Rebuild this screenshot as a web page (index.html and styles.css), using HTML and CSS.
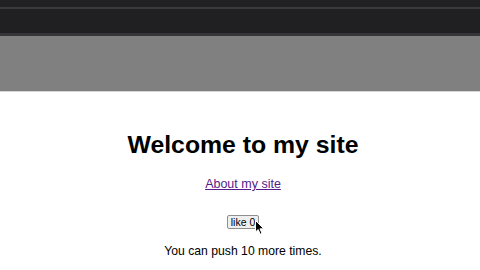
FILE: index.html
```html
<!DOCTYPE html>
<html>
<head>
<meta charset="utf-8">
<link rel="stylesheet" href="styles.css">
</head>
<body>
<div class="chrome">
  <div class="tabs"></div>
  <div class="sep"></div>
  <div class="toolbar"></div>
  <div class="sep2"></div>
</div>
<div class="banner"></div>
<div class="edge"></div>
<main class="content">
  <h1 class="title">Welcome to my site</h1>
  <a class="link" href="#">About my site</a>
  <div class="btn-wrap">
    <button class="like">like 0</button>
    <svg class="cursor" width="10" height="16" viewBox="0 0 10 16"><path d="M0.5 0.5 L0.5 12 L3.2 9.5 L5.2 14.2 L7 13.4 L5 8.8 L8.8 8.8 Z" fill="#000" stroke="#fff" stroke-width="1"/></svg>
  </div>
  <p class="note">You can push 10 more times.</p>
</main>
</body>
</html>
```
FILE: styles.css
```css
html, body { margin: 0; padding: 0; background: #fff; }
body { width: 480px; height: 270px; overflow: hidden; font-family: "Liberation Sans", Arial, sans-serif; }
.chrome { background: #202022; }
.tabs { height: 7px; background: #212123; }
.sep { height: 2px; background: #3a3a3d; }
.toolbar { height: 24px; background: #202022; }
.sep2 { height: 3px; background: #36363a; }
.banner { height: 55px; background: #808080; }
.edge { height: 1px; background: #d8d8d8; }
.content { display: flex; flex-direction: column; align-items: center; padding-left: 6px; }
.title { margin: 39px 0 0; font-size: 24.8px; font-weight: bold; line-height: 28px; color: #000; }
.link { margin-top: 18px; font-size: 12.5px; line-height: 15px; color: #551a8b; text-decoration: underline; }
.btn-wrap { position: relative; margin-top: 23px; }
.like { display: block; font-family: "Liberation Sans", Arial, sans-serif; font-size: 10.5px; line-height: 12px; padding: 0 3px; height: 14px; border: 1px solid #8f8f8f; border-radius: 2px; background: #efefef; color: #000; }
.cursor { position: absolute; left: 28px; top: 5px; }
.note { margin: 15px 0 0; font-size: 12.2px; line-height: 14px; color: #000; }
```
